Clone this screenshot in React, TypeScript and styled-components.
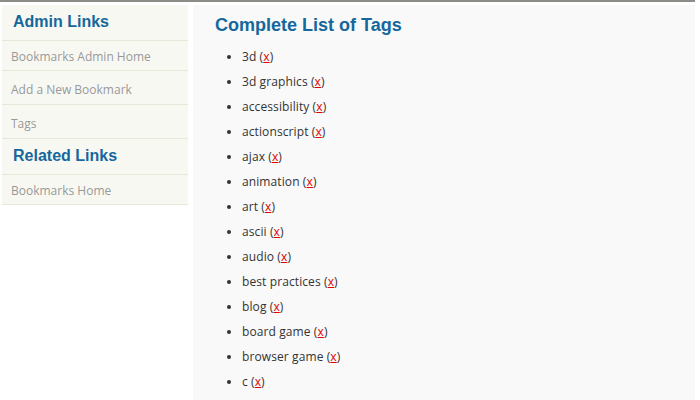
import React from "react";
import styled, { createGlobalStyle } from "styled-components";

const Global = createGlobalStyle`
  html, body { margin: 0; padding: 0; background: #ffffff; }
  body { font-family: "Open Sans", "Liberation Sans", sans-serif; }
`;

const Page = styled.div`
  width: 695px;
  border-top: 2px solid #8c8c88;
  padding: 3px 0 0 2px;
  box-sizing: border-box;
  display: flex;
  align-items: flex-start;
  gap: 5px;
`;

const Sidebar = styled.aside`
  width: 186px;
  background: #f8f8f3;
  flex-shrink: 0;
`;

const SideHeading = styled.h2`
  margin: 0;
  height: 36px;
  box-sizing: border-box;
  padding: 8px 0 0 11px;
  font-family: "Liberation Sans", Arial, sans-serif;
  font-weight: bold;
  font-size: 16px;
  color: #15679c;
  border-bottom: 1px solid #e8e8da;
`;

const SideList = styled.ul`
  list-style: none;
  margin: 0;
  padding: 0;
`;

const SideItem = styled.li<{ $h: number; $pt: number }>`
  height: ${(p) => p.$h}px;
  box-sizing: border-box;
  border-bottom: 1px solid #e8e8da;
  display: flex;
  align-items: center;
  padding: ${(p) => p.$pt}px 0 0 9px;
  font-size: 12px;
  color: #999999;
`;

const Main = styled.main`
  flex: 1;
  min-height: 395px;
  background: #f9f9f9;
  padding: 9px 0 0 22px;
  box-sizing: border-box;
`;

const Title = styled.h1`
  margin: 0 0 8px 0;
  font-family: "Liberation Sans", Arial, sans-serif;
  font-weight: bold;
  font-size: 18px;
  color: #15679c;
  line-height: 22px;
`;

const TagList = styled.ul`
  margin: 0;
  padding: 0 0 0 27px;
  list-style: disc;
`;

const Tag = styled.li`
  font-size: 12px;
  line-height: 25px;
  color: #333333;
  letter-spacing: 0.1px;
  &::marker { font-size: 11px; color: #333; }
`;

const Remove = styled.a`
  color: #e00000;
  text-decoration: underline;
`;

const adminLinks: [string, number, number][] = [
  ["Bookmarks Admin Home", 30, 1],
  ["Add a New Bookmark", 34, 4],
  ["Tags", 34, 3],
];

const tags = [
  "3d",
  "3d graphics",
  "accessibility",
  "actionscript",
  "ajax",
  "animation",
  "art",
  "ascii",
  "audio",
  "best practices",
  "blog",
  "board game",
  "browser game",
  "c",
];

export default function App() {
  return (
    <>
      <Global />
      <Page>
        <Sidebar>
          <SideHeading>Admin Links</SideHeading>
          <SideList>
            {adminLinks.map(([label, h, pt]) => (
              <SideItem key={label} $h={h} $pt={pt}>
                {label}
              </SideItem>
            ))}
          </SideList>
          <SideHeading>Related Links</SideHeading>
          <SideList>
            <SideItem $h={30} $pt={1}>Bookmarks Home</SideItem>
          </SideList>
        </Sidebar>
        <Main>
          <Title>Complete List of Tags</Title>
          <TagList>
            {tags.map((t) => (
              <Tag key={t}>
                {t} (<Remove href="#">x</Remove>)
              </Tag>
            ))}
          </TagList>
        </Main>
      </Page>
    </>
  );
}
